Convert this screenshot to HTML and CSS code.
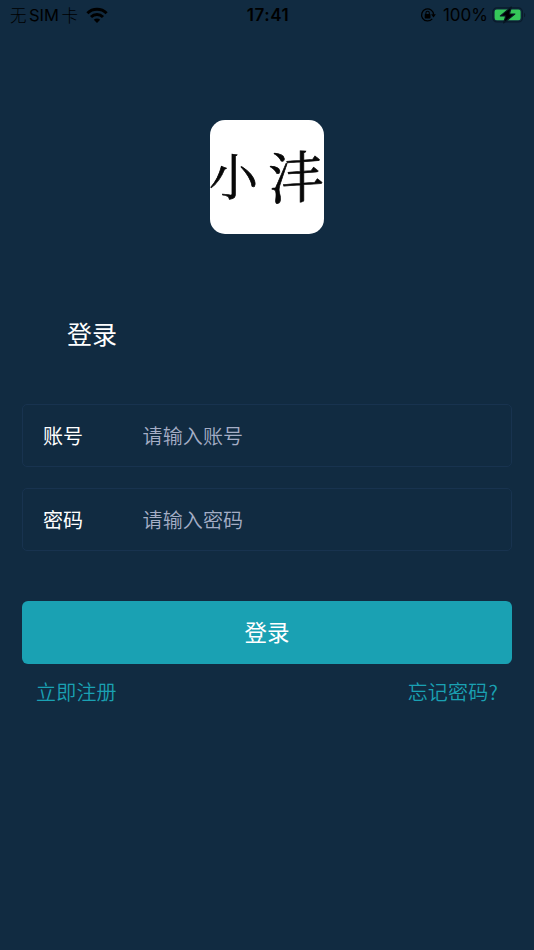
FILE: index.html
```html
<!DOCTYPE html>
<html lang="zh-CN">
<head>
<meta charset="utf-8">
<title>登录</title>
<link rel="stylesheet" href="styles.css">
</head>
<body>
<header class="status">
  <div class="status-left">
    <span class="carrier"><span class="cjk">无</span><span class="sim">SIM</span><span class="cjk">卡</span></span>
    <svg class="wifi" width="22" height="16" viewBox="0 0 22 16"><g fill="none" stroke="#000" stroke-width="3"><path d="M1.4 6.2a13.7 13.7 0 0 1 19.2 0"/><path d="M5 10a8.6 8.6 0 0 1 12 0"/></g><path d="M11 16l-3.2-3.2a4.6 4.6 0 0 1 6.4 0z"/></svg>
  </div>
  <div class="time">17:41</div>
  <div class="status-right">
    <svg class="lock" width="16" height="16" viewBox="0 0 16 16"><path d="M12.2 11.8a6 6 0 1 1 1.4-4" fill="none" stroke="#000" stroke-width="1.3"/><path d="M11.1 7.2h4.8l-2.4 3.2z"/><rect x="4.7" y="7" width="5.8" height="4.4" rx=".7"/><path d="M5.9 7.2V5.9a1.7 1.7 0 0 1 3.4 0v1.3" fill="none" stroke="#000" stroke-width="1.1"/></svg>
    <span class="percent">100%</span>
    <svg class="battery" width="34" height="18" viewBox="0 0 34 18"><rect x=".9" y="1.9" width="29.5" height="14" rx="4" fill="none" stroke="#0a1b2b" stroke-width="1.2"/><rect x="2.6" y="3.6" width="26" height="10.6" rx="2.2" fill="#35c759"/><path d="M32 6.7v4.6c1.7-.8 1.7-3.8 0-4.6z" fill="#0a1b2b"/><path d="M19.3 1L8.4 9.9h5.4L11.6 17l11.2-9h-5.4z" fill="#000" stroke="#081723" stroke-width="1.2" stroke-linejoin="round"/></svg>
  </div>
</header>
<main class="page">
  <div class="logo"><span class="logo-xiao">小</span><span class="logo-feng">沣</span></div>
  <h1 class="title">登录</h1>
  <form class="form">
    <label class="field"><span class="label">账号</span><input class="input" type="text" placeholder="请输入账号"></label>
    <label class="field"><span class="label">密码</span><input class="input" type="password" placeholder="请输入密码"></label>
    <button class="submit" type="button">登录</button>
  </form>
  <nav class="links"><a>立即注册</a><a>忘记密码?</a></nav>
</main>
</body>
</html>
```
FILE: styles.css
```css
* { box-sizing: border-box; }
body {
  margin: 0;
  min-height: 950px;
  background: #112b41;
  color: #fff;
  font-family: "Noto Sans CJK SC", sans-serif;
}
.status {
  display: grid;
  grid-template-columns: 1fr auto 1fr;
  align-items: center;
  height: 30px;
  padding: 0 8px 0 10px;
  color: #000;
  font: 17px/30px Inter, "Noto Sans CJK SC", sans-serif;
}
.status-left, .status-right { display: flex; align-items: center; }
.status-right { justify-content: flex-end; }
.carrier { display: flex; width: 68px; justify-content: space-between; }
.cjk { font: 300 16.5px/30px "Noto Sans CJK SC", sans-serif; }
.sim { font-size: 16.5px; }
.wifi { margin-left: 8px; margin-bottom: 1px; }
.time { font-weight: 600; font-size: 17px; letter-spacing: .5px; }
.percent { margin: 0 4px 0 7px; font-size: 17px; }
.battery { margin-bottom: 1px; }
.page { padding: 90px 22px 0; }
.logo {
  display: flex;
  justify-content: space-between;
  width: 114px;
  height: 114px;
  margin: 0 auto;
  border-radius: 15px;
  background: #fff;
  color: #080808;
  font-family: "Noto Serif CJK SC", "Noto Sans CJK SC", serif;
  font-size: 56px;
  line-height: 108px;
  -webkit-text-stroke: .7px #080808;
}
.logo-xiao { margin-left: -1px; font-size: 49px; }
.logo-feng { transform: skewY(-4deg); }
.title {
  margin: 79px 0 0 45px;
  font-size: 25px;
  line-height: 40px;
  font-weight: 400;
}
.form { margin-top: 51px; }
.field {
  display: flex;
  align-items: center;
  height: 63px;
  margin-bottom: 21px;
  padding-left: 20px;
  border: 1px solid #18334f;
  border-radius: 5px;
  font-size: 20px;
}
.label { width: 99.5px; }
.input {
  flex: 1;
  min-width: 0;
  height: 40px;
  padding: 0;
  border: 0;
  outline: 0;
  background: transparent;
  color: #fff;
  font: 350 20px "Noto Sans CJK SC", sans-serif;
  letter-spacing: .15px;
}
.input::placeholder { color: #a5aec6; opacity: 1; }
.submit {
  display: block;
  width: 100%;
  height: 63px;
  margin-top: 50px;
  padding: 0 0 4px;
  border: 0;
  border-radius: 6px;
  background: #1aa1b3;
  color: #fff;
  font: 400 22.5px "Noto Sans CJK SC", sans-serif;
}
.links {
  display: flex;
  justify-content: space-between;
  margin-top: 13px;
  padding: 0 14px;
  color: #1aa1b3;
  font-size: 20px;
  line-height: 30px;
  font-weight: 350;
  letter-spacing: .2px;
}
```
